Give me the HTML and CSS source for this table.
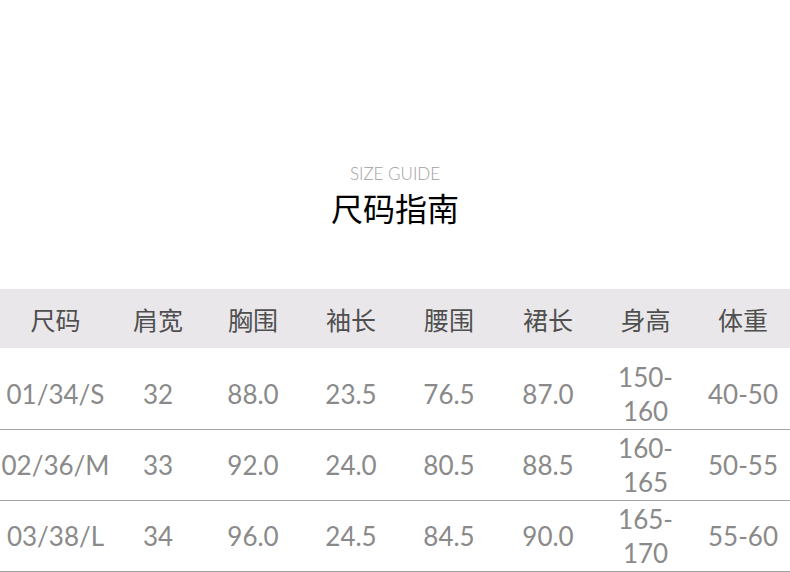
FILE: index.html
```html
<!DOCTYPE html>
<html lang="zh-CN">
<head>
<meta charset="utf-8">
<title>尺码指南</title>
<link rel="stylesheet" href="styles.css">
</head>
<body>
<main class="page">
  <header class="intro">
    <p class="eyebrow">SIZE GUIDE</p>
    <h1 class="title">尺码指南</h1>
  </header>
  <section class="size-table">
    <div class="row head">
      <div class="cell">尺码</div>
      <div class="cell">肩宽</div>
      <div class="cell">胸围</div>
      <div class="cell">袖长</div>
      <div class="cell">腰围</div>
      <div class="cell">裙长</div>
      <div class="cell">身高</div>
      <div class="cell last">体重</div>
    </div>
    <div class="body">
      <div class="row">
        <div class="cell">01/34/S</div>
        <div class="cell">32</div>
        <div class="cell">88.0</div>
        <div class="cell">23.5</div>
        <div class="cell">76.5</div>
        <div class="cell">87.0</div>
        <div class="cell">150-<br>160</div>
        <div class="cell last">40-50</div>
      </div>
      <div class="row">
        <div class="cell">02/36/M</div>
        <div class="cell">33</div>
        <div class="cell">92.0</div>
        <div class="cell">24.0</div>
        <div class="cell">80.5</div>
        <div class="cell">88.5</div>
        <div class="cell">160-<br>165</div>
        <div class="cell last">50-55</div>
      </div>
      <div class="row">
        <div class="cell">03/38/L</div>
        <div class="cell">34</div>
        <div class="cell">96.0</div>
        <div class="cell">24.5</div>
        <div class="cell">84.5</div>
        <div class="cell">90.0</div>
        <div class="cell">165-<br>170</div>
        <div class="cell last">55-60</div>
      </div>
    </div>
  </section>
</main>
</body>
</html>
```

FILE: styles.css
```css
html, body {
  margin: 0;
  padding: 0;
  background: #ffffff;
}

.page {
  width: 790px;
  overflow: hidden;
}

.intro {
  padding-top: 163px;
  text-align: center;
}

.eyebrow {
  margin: 0;
  font-family: Lato, "Liberation Sans", sans-serif;
  font-weight: 300;
  font-size: 17px;
  line-height: 21px;
  color: #a0a0a0;
}

.title {
  margin: 3px 0 0;
  font-family: "Noto Sans CJK SC", sans-serif;
  font-weight: 400;
  font-size: 32px;
  line-height: 40px;
  color: #000000;
}

.size-table {
  margin-top: 62px;
}

.row {
  display: grid;
  grid-template-columns: 111px 94px 96px 100px 96px 102px 93px 98px;
  align-items: center;
  text-align: center;
}

.row.head {
  height: 59px;
  background: #e9e7ea;
  font-family: "Noto Sans CJK SC", sans-serif;
  font-size: 25px;
  color: #4f4f4f;
}

.body {
  padding-top: 11px;
}

.body .row {
  height: 70px;
  border-bottom: 1px solid #a3a3a3;
  font-family: Lato, "Noto Sans", sans-serif;
  font-size: 26px;
  line-height: 34px;
  color: #8a8a8a;
}

.cell {
  white-space: nowrap;
}

.cell.last {
  padding-left: 4px;
}
```
